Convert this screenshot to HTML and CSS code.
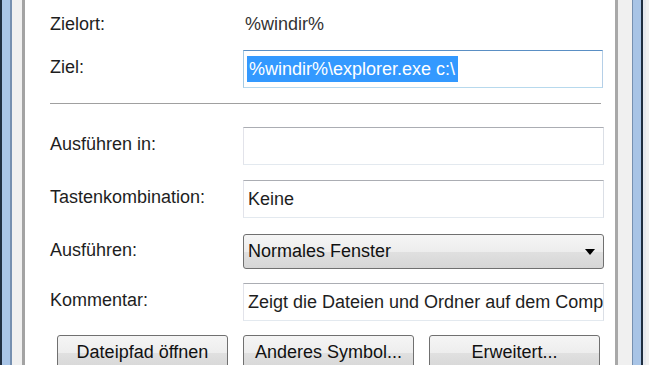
FILE: index.html
```html
<!DOCTYPE html>
<html>
    <head>
        <title>Eigenschaften</title>
        <meta charset="utf-8">
        <link rel="stylesheet" href="styles.css">
    </head>
    <body>
        <div class="frame-left"></div>

        <div class="dialog">
            <div class="tab-page">
                <div class="row row-top">
                    <div class="label">Zielort:</div>
                    <div class="value">%windir%</div>
                </div>
                <div class="row row-ziel">
                    <div class="label">Ziel:</div>
                    <div class="field field-focus"><span class="selected">%windir%\explorer.exe c:\</span></div>
                </div>

                <div class="separator"></div>

                <div class="row row-first">
                    <div class="label">Ausführen in:</div>
                    <div class="field"></div>
                </div>
                <div class="row">
                    <div class="label">Tastenkombination:</div>
                    <div class="field">Keine</div>
                </div>
                <div class="row row-combo">
                    <div class="label">Ausführen:</div>
                    <div class="combo">Normales Fenster<span class="arrow"></span></div>
                </div>
                <div class="row">
                    <div class="label">Kommentar:</div>
                    <div class="field">Zeigt die Dateien und Ordner auf dem Computer an.</div>
                </div>

                <div class="buttons">
                    <div class="btn">Dateipfad öffnen</div>
                    <div class="btn">Anderes Symbol...</div>
                    <div class="btn">Erweitert...</div>
                </div>
            </div>
        </div>

        <div class="frame-right"></div>
        <div class="outside"></div>
    </body>
</html>
```
FILE: styles.css
```css
body {
    margin: 0;
    height: 365px;
    overflow: hidden;
    display: flex;
    font-family: "Liberation Sans", Arial, sans-serif;
    font-size: 18px;
    color: #1e1e1e;
    background-color: #f0f0f0;
}

/* window border, aero blue */
.frame-left {
    width: 8px;
    border-left: 2px solid #1f2e40;
    border-right: 2px solid #7690b0;
    background-color: #a8c4e6;
}
.frame-right {
    width: 8px;
    border-left: 1px solid #7690b0;
    border-right: 2px solid #1f2e40;
    background-color: #a8c4e6;
}
.outside {
    width: 3px;
    background-color: #e6e9ee;
}

.dialog {
    width: 596px;
    padding: 0 14px 0 10px;
    background-color: #f0f0f0;
}
.tab-page {
    height: 100%;
    box-sizing: border-box;
    background-color: #fff;
    border-left: 3px solid #a3a3a3;
    border-right: 3px solid #a8a8a8;
    padding: 3px 0 0 25px;
}

.row {
    display: grid;
    grid-template-columns: 193px 361px;
    align-items: center;
    height: 38px;
    margin-top: 15px;
}
.row-top {
    margin-top: 0;
}
.row-top .label,
.row-top .value {
    padding-top: 5px;
    padding-bottom: 0;
}
.row-ziel {
    margin-top: 9px;
}
.row-first {
    margin-top: 21px;
}
.row-combo {
    height: 35px;
    margin-top: 16px;
}
.row-combo + .row {
    margin-top: 14px;
}
.label {
    padding-bottom: 3px;
}
.value {
    padding-left: 2px;
    color: #333;
}

.field {
    height: 38px;
    box-sizing: border-box;
    border: 1px solid;
    border-color: #abadb3 #dbdfe6 #e3e9ef #e2e3ea;
    background-color: #fff;
    padding: 0 4px;
    display: flex;
    align-items: center;
    white-space: nowrap;
    overflow: hidden;
}
.field-focus {
    width: 360px;
    padding: 0 3px;
    border-color: #5a8fc4 #b5cfe7 #b7d9ed #a4c9e3;
}
.selected {
    background-color: #3399ff;
    color: #fff;
    line-height: 26px;
    padding: 0 3px 0 2px;
}

.separator {
    width: 551px;
    height: 1px;
    margin-top: 15px;
    border-top: 1px solid #a0a0a0;
    border-bottom: 1px solid #fff;
}

.combo {
    height: 35px;
    box-sizing: border-box;
    border: 1px solid #707070;
    border-radius: 3px;
    background: linear-gradient(#f5f5f5 0%, #ededed 50%, #e0e0e0 51%, #d6d6d6 100%);
    padding: 0 8px 0 4px;
    display: flex;
    align-items: center;
    justify-content: space-between;
    color: #111;
}
.arrow {
    width: 0;
    height: 0;
    border-left: 5px solid transparent;
    border-right: 5px solid transparent;
    border-top: 6px solid #000;
}

.buttons {
    display: flex;
    gap: 15px;
    margin: 14px 0 0 7px;
}
.btn {
    width: 171px;
    height: 36px;
    box-sizing: border-box;
    border: 1px solid #707070;
    border-radius: 3px;
    background: linear-gradient(#f5f5f5 0%, #ededed 50%, #e0e0e0 51%, #d6d6d6 100%);
    display: flex;
    align-items: center;
    justify-content: center;
    padding-bottom: 2px;
    color: #111;
}
```
